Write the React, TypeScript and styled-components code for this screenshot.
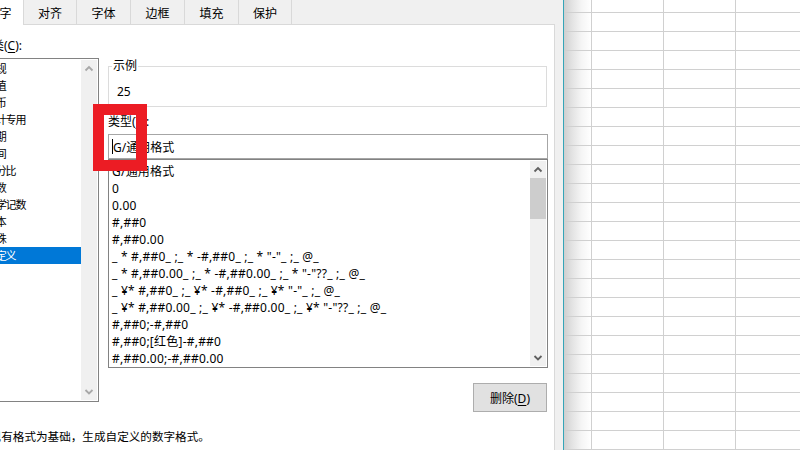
import React from "react";
import styled, { createGlobalStyle } from "styled-components";

const GlobalStyle = createGlobalStyle`
  html, body { margin: 0; padding: 0; background: #fff; }
  body { font-family: "Noto Sans", "Noto Sans CJK SC", sans-serif; }
  * { box-sizing: border-box; }
`;

const FONT = `"Noto Sans", "Noto Sans CJK SC", sans-serif`;

const Screen = styled.div`
  position: relative;
  width: 800px;
  height: 450px;
  overflow: hidden;
  display: flex;
  background: #fff;
  color: #000;
  font-family: ${FONT};
  font-size: 12px;
`;

const Dialog = styled.div`
  flex: 0 0 590px;
  margin-left: -26px;
  display: flex;
  flex-direction: column;
  background: #f0f0f0;
  border-right: 1px solid #35a5b8;
  padding-right: 8px;
`;

const TabBar = styled.div`
  position: relative;
  z-index: 1;
  display: flex;
  align-items: flex-end;
  height: 24px;
  padding-left: 2px;
`;

const Tab = styled.div<{ $w: number; $active?: boolean }>`
  flex: 0 0 ${(p) => p.$w}px;
  height: ${(p) => (p.$active ? 25 : 24)}px;
  margin-bottom: ${(p) => (p.$active ? -1 : 0)}px;
  display: flex;
  align-items: center;
  justify-content: center;
  padding-top: 1px;
  background: ${(p) => (p.$active ? "#ffffff" : "#f0f0f0")};
  border-right: 1px solid #d9d9d9;
  font-size: 12px;
  white-space: nowrap;
`;

const Panel = styled.div`
  flex: 1;
  background: #fff;
  border: 1px solid #d9d9d9;
  border-bottom: none;
  padding: 13px 0 0 5px;
  display: flex;
  flex-direction: column;
`;

const Body = styled.div`
  display: grid;
  grid-template-columns: 119px 440px;
  column-gap: 9px;
  align-items: start;
`;

const Column = styled.div<{ $top?: number }>`
  display: flex;
  flex-direction: column;
  padding-top: ${(p) => p.$top ?? 0}px;
`;

const FieldLabel = styled.div<{ $gap?: number }>`
  height: 16px;
  line-height: 16px;
  margin-top: ${(p) => p.$gap ?? 0}px;
  white-space: nowrap;
`;

const Key = styled.span`
  text-decoration: underline;
  text-underline-offset: 2px;
`;

const ListBox = styled.div<{ $h: number; $gap: number }>`
  height: ${(p) => p.$h}px;
  margin-top: ${(p) => p.$gap}px;
  border: 1px solid #828282;
  padding: 1px;
  display: flex;
  background: #fff;
  overflow: hidden;
`;

const Rows = styled.div<{ $top?: number }>`
  flex: 1;
  min-width: 0;
  display: flex;
  flex-direction: column;
  padding-top: ${(p) => p.$top ?? 0}px;
  overflow: hidden;
`;

const ListRow = styled.div<{ $pad: number; $size: number; $spacing: number; $selected?: boolean }>`
  flex: 0 0 17px;
  height: 17px;
  line-height: 17px;
  padding-left: ${(p) => p.$pad}px;
  font-size: ${(p) => p.$size}px;
  letter-spacing: ${(p) => p.$spacing}px;
  white-space: nowrap;
  background: ${(p) => (p.$selected ? "#0078d7" : "transparent")};
  color: ${(p) => (p.$selected ? "#ffffff" : "#000000")};
`;

const ScrollBar = styled.div`
  flex: 0 0 16px;
  background: #f0f0f0;
  display: flex;
  flex-direction: column;
`;

const ArrowButton = styled.div`
  flex: 0 0 17px;
  display: flex;
  align-items: center;
  justify-content: center;
`;

const Thumb = styled.div`
  flex: 0 0 41px;
  background: #cdcdcd;
`;

const Track = styled.div`
  flex: 1;
`;

const GroupBox = styled.fieldset`
  margin: 0;
  width: 439px;
  min-inline-size: 0;
  border: 1px solid #dcdcdc;
  padding: 10px 8px 6px;
`;

const Legend = styled.legend`
  padding: 0 1px;
  margin-left: -5px;
  line-height: 16px;
  font-size: 12px;
`;

const SampleValue = styled.div`
  line-height: 16px;
`;

const TextInput = styled.div`
  height: 25px;
  margin-top: 4px;
  border: 1px solid #a6a6a6;
  display: flex;
  align-items: center;
  padding-left: 3px;
  white-space: nowrap;
`;

const Caret = styled.span`
  width: 1px;
  height: 15px;
  background: #000;
`;

const Button = styled.button`
  align-self: flex-end;
  width: 74px;
  height: 29px;
  margin-top: 15px;
  margin-right: 1px;
  padding: 0;
  background: #e1e1e1;
  border: 1px solid #adadad;
  font-family: ${FONT};
  font-size: 12px;
  color: #000;
`;

const Footnote = styled.div`
  margin-top: 17px;
  margin-left: -2px;
  line-height: 16px;
  font-size: 11.6px;
  white-space: nowrap;
`;

const Sheet = styled.div`
  flex: 1;
  min-width: 0;
  overflow: hidden;
  background: #fff;
`;

const SheetGrid = styled.div`
  display: grid;
  grid-template-columns: 28px repeat(4, 72px);
  grid-auto-rows: 19px;
  margin-top: -6px;
`;

const Cell = styled.div<{ $header?: boolean }>`
  border-right: 1px solid #d0d0d0;
  border-bottom: 1px solid #d0d0d0;
  background: ${(p) =>
    p.$header
      ? "linear-gradient(to right, #cfcfcf 0%, #e3e3e3 30%, #f5f5f5 65%, #ffffff 100%)"
      : "#ffffff"};
`;

const Highlight = styled.div`
  position: absolute;
  left: 93px;
  top: 104px;
  width: 54px;
  height: 67px;
  border: 11px solid #ec1c24;
  pointer-events: none;
`;

const Chevron: React.FC<{ up?: boolean; color: string }> = ({ up, color }) => (
  <svg width="16" height="17" viewBox="0 0 16 17">
    <polyline
      points={up ? "4.5,10.5 8,7 11.5,10.5" : "4.5,7 8,10.5 11.5,7"}
      fill="none"
      stroke={color}
      strokeWidth="1.8"
    />
  </svg>
);

const categories = [
  "常规",
  "数值",
  "货币",
  "会计专用",
  "日期",
  "时间",
  "百分比",
  "分数",
  "科学记数",
  "文本",
  "特殊",
  "自定义",
];

const formats = [
  "G/通用格式",
  "0",
  "0.00",
  "#,##0",
  "#,##0.00",
  '_ * #,##0_ ;_ * -#,##0_ ;_ * "-"_ ;_ @_',
  '_ * #,##0.00_ ;_ * -#,##0.00_ ;_ * "-"??_ ;_ @_',
  '_ ¥* #,##0_ ;_ ¥* -#,##0_ ;_ ¥* "-"_ ;_ @_',
  '_ ¥* #,##0.00_ ;_ ¥* -#,##0.00_ ;_ ¥* "-"??_ ;_ @_',
  "#,##0;-#,##0",
  "#,##0;[红色]-#,##0",
  "#,##0.00;-#,##0.00",
  "#,##0.00;[红色]-#,##0.00",
];

const tabs: { label: string; w: number; active?: boolean }[] = [
  { label: "数字", w: 48, active: true },
  { label: "对齐", w: 53 },
  { label: "字体", w: 54 },
  { label: "边框", w: 54 },
  { label: "填充", w: 54 },
  { label: "保护", w: 53 },
];

export default function App() {
  const sheetRows = Array.from({ length: 25 });
  return (
    <>
      <GlobalStyle />
      <Screen>
        <Dialog>
          <TabBar>
            {tabs.map((t) => (
              <Tab key={t.label} $w={t.w} $active={t.active}>
                {t.label}
              </Tab>
            ))}
          </TabBar>
          <Panel>
            <Body>
              <Column>
                <FieldLabel>
                  分类(<Key>C</Key>):
                </FieldLabel>
                <ListBox $h={344} $gap={4}>
                  <Rows>
                    {categories.map((c) => (
                      <ListRow
                        key={c}
                        $pad={4}
                        $size={11}
                        $spacing={-1.2}
                        $selected={c === "自定义"}
                      >
                        {c}
                      </ListRow>
                    ))}
                  </Rows>
                  <ScrollBar>
                    <ArrowButton>
                      <Chevron up color="#a8a8a8" />
                    </ArrowButton>
                    <Track />
                    <ArrowButton>
                      <Chevron color="#a8a8a8" />
                    </ArrowButton>
                  </ScrollBar>
                </ListBox>
              </Column>
              <Column $top={20}>
                <GroupBox>
                  <Legend>示例</Legend>
                  <SampleValue>25</SampleValue>
                </GroupBox>
                <FieldLabel $gap={7}>
                  类型(<Key>T</Key>):
                </FieldLabel>
                <TextInput>
                  <Caret />
                  G/通用格式
                </TextInput>
                <ListBox $h={209} $gap={0}>
                  <Rows $top={2}>
                    {formats.map((f) => (
                      <ListRow key={f} $pad={2} $size={12} $spacing={0.22}>
                        {f}
                      </ListRow>
                    ))}
                  </Rows>
                  <ScrollBar>
                    <ArrowButton>
                      <Chevron up color="#606060" />
                    </ArrowButton>
                    <Thumb />
                    <Track />
                    <ArrowButton>
                      <Chevron color="#606060" />
                    </ArrowButton>
                  </ScrollBar>
                </ListBox>
                <Button>
                  删除(<Key>D</Key>)
                </Button>
              </Column>
            </Body>
            <Footnote>以现有格式为基础，生成自定义的数字格式。</Footnote>
          </Panel>
        </Dialog>
        <Sheet>
          <SheetGrid>
            {sheetRows.map((_, r) => (
              <React.Fragment key={r}>
                <Cell $header />
                <Cell />
                <Cell />
                <Cell />
                <Cell />
              </React.Fragment>
            ))}
          </SheetGrid>
        </Sheet>
        <Highlight />
      </Screen>
    </>
  );
}
